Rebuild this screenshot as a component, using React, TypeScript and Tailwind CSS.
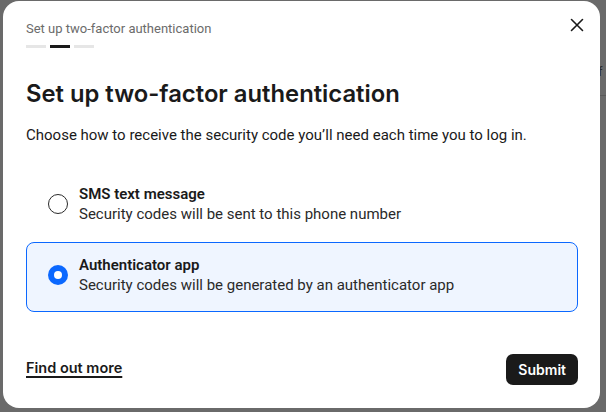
import React from "react";

export default function App() {
  return (
    <div className="relative w-[606px] h-[412px] bg-[#6a6a6a] overflow-hidden" style={{ fontFamily: "Roboto, 'Liberation Sans', sans-serif" }}>
      <div className="absolute left-[598px] top-[62px] text-[13px] text-[#2a2a2a]">f</div>
      <div className="absolute left-[598px] top-[95px] w-[8px] h-px bg-[#5a5a5a]" />
      <div className="absolute left-[3px] top-[1px] w-[597px] h-[407px] bg-white rounded-[16px] flex flex-col pl-[23px] pr-[22px]">
        <div className="pt-[19px] text-[13px] text-[#6b6b6b] leading-[17px]">Set up two-factor authentication</div>
        <div className="mt-[8px] flex gap-[4px]">
          <div className="w-[20px] h-[3px] bg-[#e6e6e6]" />
          <div className="w-[20px] h-[3px] bg-[#1a1a1a]" />
          <div className="w-[20px] h-[3px] bg-[#e6e6e6]" />
        </div>
        <button className="absolute right-[15px] top-[16px] w-[16px] h-[16px] flex items-center justify-center text-[#1a1a1a]">
          <svg width="14" height="14" viewBox="0 0 14 14" fill="none" stroke="currentColor" strokeWidth="1.6" strokeLinecap="round">
            <path d="M1.5 1.5 L12.5 12.5 M12.5 1.5 L1.5 12.5" />
          </svg>
        </button>
        <h1 className="mt-[31px] text-[23.8px] leading-[30px] font-semibold text-[#1a1a1a]" style={{ fontFamily: "Inter, 'Open Sans', sans-serif" }}>
          Set up two-factor authentication
        </h1>
        <p className="mt-[16px] text-[15px] leading-[20px] text-[#1a1a1a]">
          Choose how to receive the security code you’ll need each time you to log in.
        </p>
        <div className="mt-[26px] flex flex-col gap-[1px]">
          <div className="h-[70px] rounded-[8px] border border-transparent flex items-center pl-[21px] pb-[4px]">
            <div className="w-[20px] h-[20px] rounded-full border-[1.5px] border-[#2a2a2a] shrink-0" />
            <div className="ml-[11px] flex flex-col">
              <div className="text-[15px] leading-[20px] font-semibold text-[#1a1a1a]">SMS text message</div>
              <div className="text-[15px] leading-[20px] text-[#2a2a2a]">Security codes will be sent to this phone number</div>
            </div>
          </div>
          <div className="h-[70px] rounded-[8px] border border-[#0b68ff] bg-[#eff5ff] flex items-center pl-[21px] pb-[4px]">
            <div className="w-[20px] h-[20px] rounded-full bg-[#0b68ff] flex items-center justify-center shrink-0">
              <div className="w-[8px] h-[8px] rounded-full bg-white" />
            </div>
            <div className="ml-[11px] flex flex-col">
              <div className="text-[15px] leading-[20px] font-semibold text-[#1a1a1a]">Authenticator app</div>
              <div className="text-[15px] leading-[20px] text-[#2a2a2a]">Security codes will be generated by an authenticator app</div>
            </div>
          </div>
        </div>
        <div className="mt-auto mb-[23px] flex items-center justify-between">
          <a className="text-[14.5px] font-semibold text-[#1a1a1a] underline underline-offset-[3px] decoration-[1.5px] -mt-[3px]" style={{ fontFamily: "Inter, 'Open Sans', sans-serif" }}>
            Find out more
          </a>
          <button className="h-[31px] px-[12px] rounded-[7px] bg-[#1a1a1a] text-white text-[14px] font-semibold" style={{ fontFamily: "Inter, 'Open Sans', sans-serif" }}>
            Submit
          </button>
        </div>
      </div>
    </div>
  );
}
